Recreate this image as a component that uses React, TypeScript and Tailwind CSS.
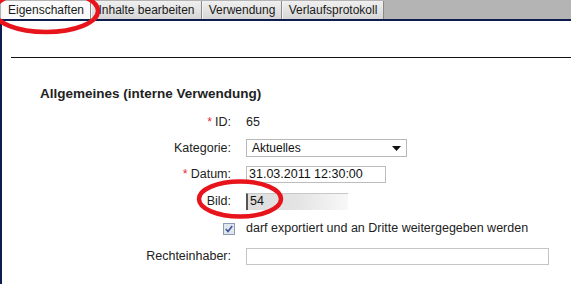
import React from "react";

const tabs = [
  { label: "Eigenschaften", w: 90, active: true },
  { label: "Inhalte bearbeiten", w: 111, active: false },
  { label: "Verwendung", w: 80, active: false },
  { label: "Verlaufsprotokoll", w: 102, active: false },
];

function Row({ label, req, children, h = 26 }: { label?: string; req?: boolean; children: React.ReactNode; h?: number }) {
  return (
    <div className="flex items-center" style={{ height: h }}>
      <div className="w-[231px] shrink-0 text-right text-[12.5px] text-[#222]">
        {req && <span className="text-[#e0303a] mr-[3px]">*</span>}
        {label}
      </div>
      <div className="ml-[15px] flex items-center flex-1">{children}</div>
    </div>
  );
}

export default function App() {
  return (
    <div
      className="relative w-[571px] h-[284px] overflow-hidden bg-white flex flex-col"
      style={{ fontFamily: '"Liberation Sans", Arial, sans-serif' }}
    >
      {/* Tab bar */}
      <div className="h-[21px] shrink-0 bg-[#b4b4b4] border-b-2 border-[#0e1d4d] flex items-end pl-[1px]">
        {tabs.map((t) => (
          <div
            key={t.label}
            className={
              "h-[18px] flex items-center justify-center text-[12px] text-[#1a1a1a] border-r border-[#8a8a8a] border-l border-l-[#f4f4f4] " +
              (t.active
                ? "bg-[#fafafa]"
                : "bg-gradient-to-b from-[#f0f0f0] to-[#d6d6d6]")
            }
            style={{ width: t.w }}
          >
            {t.label}
          </div>
        ))}
      </div>

      {/* Content */}
      <div className="flex-1 border-l-2 border-[#0e1d4d] flex flex-col">
        <div className="mt-[36px] ml-[9px] h-[1px] bg-[#111]" />
        <div className="mt-[28px] ml-[38px] text-[13.5px] font-bold text-[#222] leading-[15px]">
          Allgemeines (interne Verwendung)
        </div>
        <div className="mt-[8px] -ml-[2px] flex flex-col">
          <Row label="ID:" req>
            <span className="text-[12.5px] text-[#222]">65</span>
          </Row>
          <Row label="Kategorie:">
            <div className="w-[161px] h-[18px] border border-[#b8b8b8] bg-white flex items-center justify-between pl-[5px] pr-[5px]">
              <span className="text-[12px] text-[#111]">Aktuelles</span>
              <svg width="9" height="5" viewBox="0 0 9 5">
                <path d="M0 0 L9 0 L4.5 5 Z" fill="#111" />
              </svg>
            </div>
          </Row>
          <Row label="Datum:" req h={27}>
            <div className="w-[140px] h-[17px] border border-[#bdbdbd] bg-white flex items-center pl-[2px]">
              <span className="text-[12.5px] text-[#111]">31.03.2011 12:30:00</span>
            </div>
          </Row>
          <Row label="Bild:" h={26}>
            <div className="w-[102px] h-[17px] border-l-2 border-l-[#555] border-t border-t-[#c8c8c8] bg-gradient-to-r from-[#dedede] via-[#e4e4e4] to-[#f8f8f8] flex items-center pl-[2px]">
              <span className="text-[12.5px] text-[#111]">54</span>
            </div>
          </Row>
          <div className="flex items-center h-[29px]">
            <div className="w-[231px] shrink-0 flex justify-end">
              <svg width="12" height="12" viewBox="0 0 12 12" className="mr-[-4px]">
                <rect x="0.5" y="0.5" width="11" height="11" fill="#dfe6f0" stroke="#8d9ab0" />
                <path d="M2.8 6 L5 8.4 L9.2 3" fill="none" stroke="#3d5596" strokeWidth="1.6" />
              </svg>
            </div>
            <div className="ml-[15px] text-[12.5px] text-[#222]">
              darf exportiert und an Dritte weitergegeben werden
            </div>
          </div>
          <Row label="Rechteinhaber:">
            <div className="w-[303px] h-[17px] border border-[#c4c4c4] bg-white" />
          </Row>
        </div>
      </div>

      {/* Red annotation ellipses */}
      <svg className="absolute left-0 top-0 pointer-events-none" width="571" height="284">
        <ellipse cx="46" cy="11" rx="52" ry="21" fill="none" stroke="#e8141c" strokeWidth="4.5" />
        <ellipse cx="240" cy="199" rx="41" ry="17.5" fill="none" stroke="#e8141c" strokeWidth="4.5" />
      </svg>
    </div>
  );
}
